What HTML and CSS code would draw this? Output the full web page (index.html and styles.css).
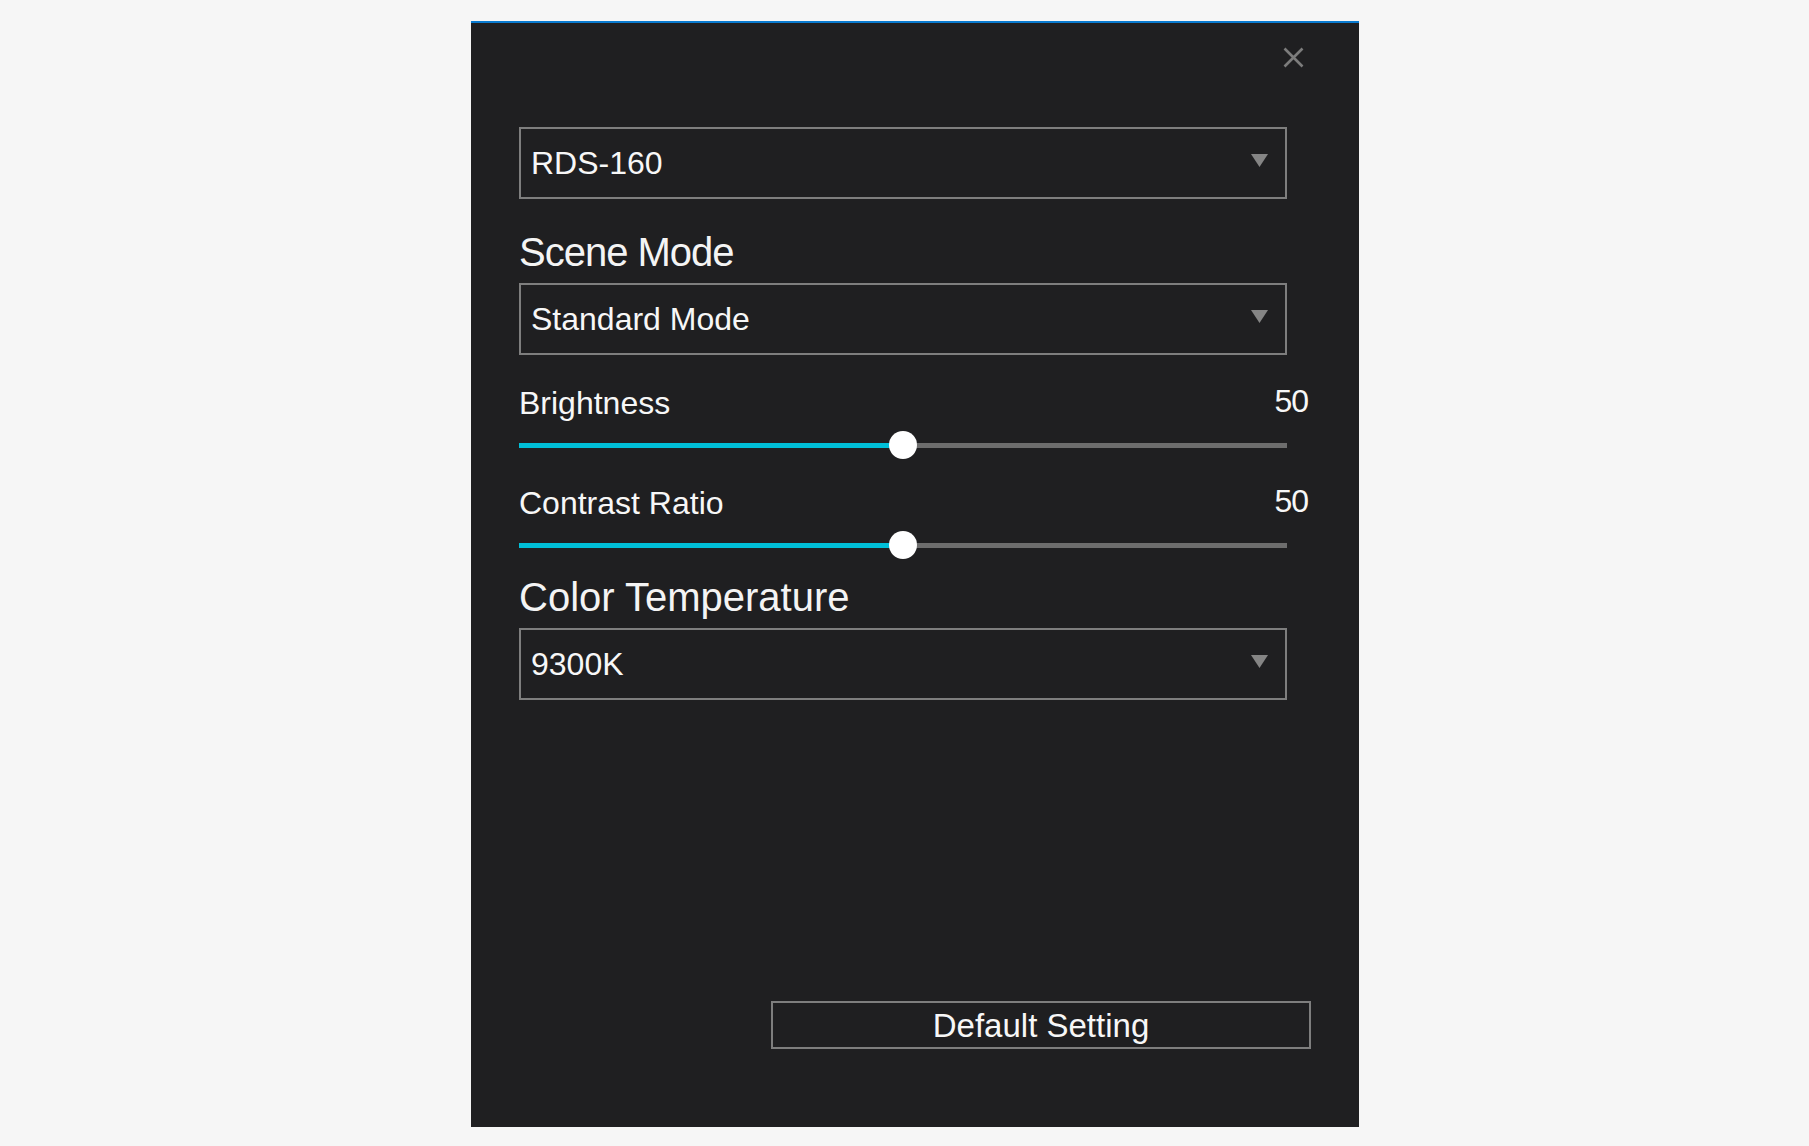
FILE: index.html
```html
<!DOCTYPE html>
<html lang="en">
<head>
<meta charset="utf-8">
<title>Display Settings</title>
<link rel="stylesheet" href="styles.css">
</head>
<body>
<div class="panel">
  <div class="header">
    <button class="close" aria-label="Close">
      <svg width="21" height="21" viewBox="0 0 21 21"><path d="M1.5 1.5 L19.5 19.5 M19.5 1.5 L1.5 19.5" stroke="#7c7c7c" stroke-width="2.6" fill="none"/></svg>
    </button>
  </div>

  <div class="select">
    <span class="select-text">RDS-160</span>
    <svg class="arrow" width="17" height="13" viewBox="0 0 17 13"><path d="M0 0 H17 L8.5 13 Z" fill="#858585"/></svg>
  </div>

  <div class="section-title title-scene">Scene Mode</div>
  <div class="select">
    <span class="select-text">Standard Mode</span>
    <svg class="arrow" width="17" height="13" viewBox="0 0 17 13"><path d="M0 0 H17 L8.5 13 Z" fill="#858585"/></svg>
  </div>

  <div class="slider-row first">
    <span class="slider-label">Brightness</span>
    <span class="slider-value">50</span>
  </div>
  <div class="slider">
    <div class="track"><div class="fill" style="width:50%"></div></div>
    <div class="knob" style="left:50%"></div>
  </div>

  <div class="slider-row">
    <span class="slider-label">Contrast Ratio</span>
    <span class="slider-value">50</span>
  </div>
  <div class="slider">
    <div class="track"><div class="fill" style="width:50%"></div></div>
    <div class="knob" style="left:50%"></div>
  </div>

  <div class="section-title title-temp">Color Temperature</div>
  <div class="select">
    <span class="select-text">9300K</span>
    <svg class="arrow" width="17" height="13" viewBox="0 0 17 13"><path d="M0 0 H17 L8.5 13 Z" fill="#858585"/></svg>
  </div>

  <button class="default-btn">Default Setting</button>
</div>
</body>
</html>
```

FILE: styles.css
```css
html, body {
  margin: 0;
  padding: 0;
}
body {
  background: #f6f6f6;
  font-family: "Liberation Sans", Arial, sans-serif;
  color: #f7f7f7;
  padding-top: 21px;
  height: 1146px;
  box-sizing: border-box;
  overflow: hidden;
}
.panel {
  box-sizing: border-box;
  width: 888px;
  height: 1106px;
  margin: 0 0 0 471px;
  background: #1f1f21;
  border-top: 2px solid #0a7bd0;
  padding: 0 72px 78px 48px;
  display: flex;
  flex-direction: column;
}
.header {
  height: 104px;
  display: flex;
  justify-content: flex-end;
  align-items: flex-start;
}
.close {
  margin: 24px -17px 0 0;
  padding: 0;
  width: 21px;
  height: 21px;
  border: 0;
  background: transparent;
  display: flex;
}
.select {
  box-sizing: border-box;
  height: 72px;
  border: 2px solid #7e7e7e;
  display: flex;
  align-items: center;
  justify-content: space-between;
  padding: 0 17px 0 10px;
}
.select-text {
  font-size: 32px;
  line-height: 32px;
  color: #f7f7f7;
}
.arrow {
  margin-top: -5px;
}
.section-title {
  font-size: 40px;
  line-height: 40px;
  margin: 33px 0 11px 0;
  color: #f4f4f4;
}
.title-scene {
  letter-spacing: -1px;
}
.title-temp {
  margin-top: 18px;
}
.slider-row {
  display: flex;
  justify-content: space-between;
  align-items: flex-start;
  margin: 29px -21px 0 0;
}
.slider-row.first {
  margin-top: 33px;
}
.slider-label {
  font-size: 32px;
  line-height: 30px;
  margin-bottom: 2px;
}
.slider-value {
  font-size: 32px;
  line-height: 27px;
  letter-spacing: -1px;
}
.slider {
  position: relative;
  height: 28px;
  margin-top: 11px;
  display: flex;
  align-items: center;
}
.track {
  flex: 1;
  height: 5px;
  background: #6d6d6d;
  display: flex;
}
.fill {
  height: 100%;
  background: #00bfd8;
}
.knob {
  position: absolute;
  top: 0;
  width: 28px;
  height: 28px;
  border-radius: 50%;
  background: #ffffff;
  transform: translateX(-50%);
}
.default-btn {
  margin-top: auto;
  align-self: flex-end;
  margin-right: -24px;
  box-sizing: border-box;
  width: 540px;
  height: 48px;
  border: 2px solid #7e7e7e;
  background: #1f1f21;
  color: #f7f7f7;
  font-family: "Liberation Sans", Arial, sans-serif;
  font-size: 33px;
  line-height: 40px;
  padding: 2px 0 0 0;
  text-align: center;
}
```
